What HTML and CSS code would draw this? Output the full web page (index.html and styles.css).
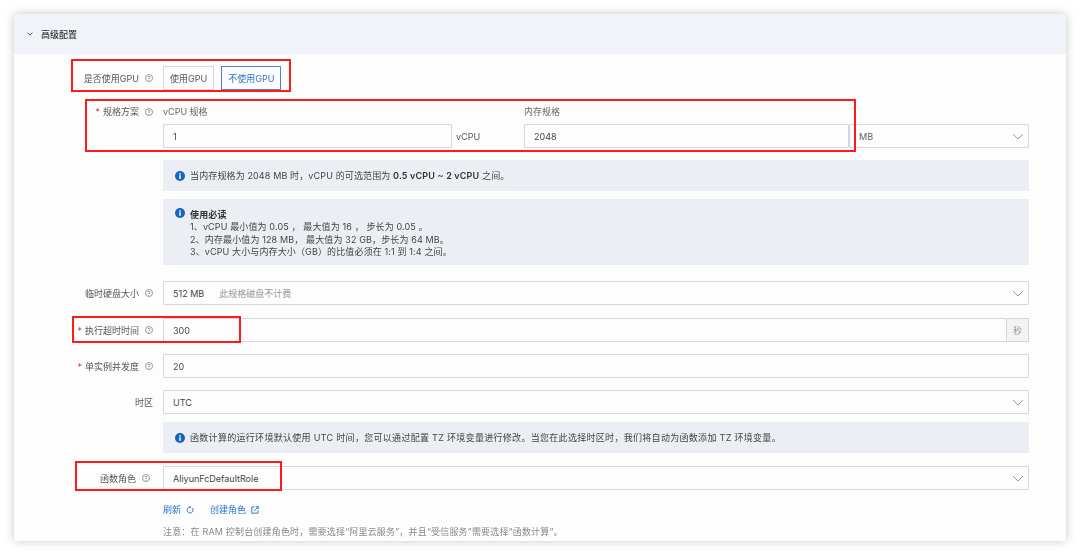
FILE: index.html
```html
<!DOCTYPE html>
<html lang="zh">
<head>
<meta charset="utf-8">
<title>高级配置</title>
<link rel="stylesheet" href="styles.css">
</head>
<body>
<div class="window">
  <div class="head">
    <svg class="head-chev" viewBox="0 0 8 5"><polyline points="0.7,0.7 4,4 7.3,0.7"/></svg>
    <span class="head-title">高级配置</span>
  </div>
  <div class="form">
    <div class="row">
      <div class="label">是否使用GPU<i class="help">?</i></div>
      <div class="field btns">
        <div class="btn">使用GPU</div>
        <div class="btn btn-on">不使用GPU</div>
      </div>
    </div>
    <div class="row row-spec">
      <div class="label label-top"><b class="req">*</b>规格方案<i class="help">?</i></div>
      <div class="field spec">
        <div class="spec-col spec-cpu">
          <div class="sub">vCPU 规格</div>
          <div class="line">
            <div class="box grow">1</div>
            <span class="unit">vCPU</span>
          </div>
        </div>
        <div class="spec-col spec-mem">
          <div class="sub">内存规格</div>
          <div class="line">
            <div class="box grow">2048</div>
            <div class="box select mb">MB<svg class="chev" viewBox="0 0 12 7"><polyline points="1,1 6,6 11,1"/></svg></div>
          </div>
        </div>
      </div>
    </div>
    <div class="row gap12">
      <div class="label"></div>
      <div class="field alert alert-one">
        <svg class="info" viewBox="0 0 12 12"><circle cx="6" cy="6" r="6"/><rect x="5.1" y="5" width="1.8" height="4.4"/><rect x="5.1" y="2.6" width="1.8" height="1.7"/></svg>
        <span>当内存规格为 2048 MB 时，vCPU 的可选范围为 <b>0.5 vCPU ~ 2 vCPU</b> 之间。</span>
      </div>
    </div>
    <div class="row gap8">
      <div class="label"></div>
      <div class="field alert alert-multi">
        <svg class="info" viewBox="0 0 12 12"><circle cx="6" cy="6" r="6"/><rect x="5.1" y="5" width="1.8" height="4.4"/><rect x="5.1" y="2.6" width="1.8" height="1.7"/></svg>
        <div class="lines">
          <div class="title">使用必读</div>
          <div>1、vCPU 最小值为 0.05 ， 最大值为 16 ， 步长为 0.05 。</div>
          <div>2、内存最小值为 128 MB， 最大值为 32 GB，步长为 64 MB。</div>
          <div>3、vCPU 大小与内存大小（GB）的比值必须在 1:1 到 1:4 之间。</div>
        </div>
      </div>
    </div>
    <div class="row gap16">
      <div class="label">临时硬盘大小<i class="help">?</i></div>
      <div class="field box select">512 MB<span class="muted">此规格磁盘不计费</span><svg class="chev" viewBox="0 0 12 7"><polyline points="1,1 6,6 11,1"/></svg></div>
    </div>
    <div class="row gap13">
      <div class="label"><b class="req">*</b>执行超时时间<i class="help">?</i></div>
      <div class="field group">
        <div class="box grow">300</div>
        <div class="addon">秒</div>
      </div>
    </div>
    <div class="row gap12">
      <div class="label"><b class="req">*</b>单实例并发度<i class="help">?</i></div>
      <div class="field box">20</div>
    </div>
    <div class="row gap12">
      <div class="label">时区</div>
      <div class="field box select">UTC<svg class="chev" viewBox="0 0 12 7"><polyline points="1,1 6,6 11,1"/></svg></div>
    </div>
    <div class="row gap8">
      <div class="label"></div>
      <div class="field alert alert-one alert-wide">
        <svg class="info" viewBox="0 0 12 12"><circle cx="6" cy="6" r="6"/><rect x="5.1" y="5" width="1.8" height="4.4"/><rect x="5.1" y="2.6" width="1.8" height="1.7"/></svg>
        <span>函数计算的运行环境默认使用 UTC 时间，您可以通过配置 TZ 环境变量进行修改。当您在此选择时区时，我们将自动为函数添加 TZ 环境变量。</span>
      </div>
    </div>
    <div class="row gap13">
      <div class="label label-role">函数角色<i class="help">?</i></div>
      <div class="field box select">AliyunFcDefaultRole<svg class="chev" viewBox="0 0 12 7"><polyline points="1,1 6,6 11,1"/></svg></div>
    </div>
    <div class="row gap14">
      <div class="label"></div>
      <div class="field links">
        <span class="link">刷新<svg class="lk-ico" viewBox="0 0 10 10"><path d="M7.9 2.6A3.7 3.7 0 1 1 5 1.3"/><path class="fill" d="M4.6 0 7 1.4 4.6 2.8Z"/></svg></span>
        <span class="link">创建角色<svg class="lk-ico" viewBox="0 0 10 10"><path d="M4.2 1.2H1v7.8h7.8V5.8"/><path d="M3.8 6.2 8.8 1.2M5.8 0.9h3.3v3.3"/></svg></span>
      </div>
    </div>
    <div class="row gap10">
      <div class="label"></div>
      <div class="field note">注意：在 RAM 控制台创建角色时，需要选择“阿里云服务”，并且“受信服务”需要选择“函数计算”。</div>
    </div>
  </div>
  <div class="mark mark-gpu"></div>
  <div class="mark mark-spec"></div>
  <div class="mark mark-time"></div>
  <div class="mark mark-role"></div>
</div>
</body>
</html>
```
FILE: styles.css
```css
* { box-sizing: border-box; }
html, body { margin: 0; height: 555px; background: #fff; overflow: hidden; }
body {
  padding: 14px;
  font-family: "Inter", "Noto Sans CJK SC", sans-serif;
  font-size: 9px;
  color: #333;
}
.window {
  position: relative;
  width: 1052px;
  height: 527px;
  background: #fdfdfd;
  box-shadow: 0 0 9px rgba(70, 60, 55, .28);
  overflow: hidden;
  filter: blur(0.3px);
}
.head {
  height: 40px;
  background: #f0f3f7;
  display: flex;
  align-items: center;
  padding-left: 13px;
}
.head-chev { width: 6px; height: 4px; margin-right: 8px; }
.head-chev polyline { fill: none; stroke: #444; stroke-width: 1.2; }
.head-title { font-weight: 500; color: #333; }
.form { padding-top: 12px; }
.row { display: flex; }
.row-spec { margin-top: 16px; }
.gap8 { margin-top: 8px; }
.gap10 { margin-top: 10px; }
.gap12 { margin-top: 12px; }
.gap13 { margin-top: 13px; }
.gap14 { margin-top: 14px; }
.gap16 { margin-top: 16px; }
.label {
  flex: 0 0 149px;
  padding-right: 10px;
  display: flex;
  align-items: center;
  justify-content: flex-end;
  color: #555;
  white-space: nowrap;
}
.label-top { align-items: flex-start; height: 12px; line-height: 12px; }
.label-role { padding-right: 13px; }
.req { color: #d93026; font-weight: 400; margin-right: 3px; }
.help {
  width: 8px;
  height: 8px;
  margin-left: 6px;
  border: 0.7px solid #999;
  border-radius: 50%;
  font-style: normal;
  font-size: 6px;
  line-height: 7px;
  text-align: center;
  color: #888;
  flex: none;
}
.label-top .help { margin-top: 2px; }
.field { width: 866px; flex: none; }
.btns { display: flex; gap: 7px; }
.btn {
  height: 24px;
  line-height: 23px;
  padding: 0 6px;
  border: 1px solid #d3d6de;
  color: #555;
}
.btn-on { border-color: #4a86d0; color: #2a72c8; }
.spec { display: flex; }
.spec-cpu { width: 361px; }
.spec-mem { width: 505px; }
.sub { height: 12px; line-height: 12px; color: #666; margin-bottom: 6px; }
.line { display: flex; align-items: center; }
.box {
  height: 24px;
  padding: 1px 9px 0;
  border: 1px solid #d3d6de;
  border-radius: 1px;
  background: #fdfdfd;
  color: #444;
  display: flex;
  align-items: center;
}
.grow { flex: 1; }
.unit { width: 72px; padding-left: 4px; color: #555; }
.spec-cpu .grow { flex: none; width: 289px; }
.mb { width: 180px; flex: none; color: #666; }
.select { position: relative; }
.chev { width: 12px; height: 7px; margin-left: auto; margin-right: -5px; margin-top: -1px; }
.chev polyline { fill: none; stroke: #999; stroke-width: 1; }
.muted { color: #999; margin-left: 15px; }
.group { display: flex; }
.addon {
  width: 22px;
  height: 24px;
  line-height: 24px;
  text-align: center;
  border: 1px solid #d3d6de;
  border-left: 0;
  background: #f3f3f3;
  color: #999;
}
.alert {
  background: #ebeef3;
  display: flex;
  color: #444;
  padding-left: 12px;
  letter-spacing: .13px;
}
.alert-wide { letter-spacing: .3px; }
.alert b { font-weight: 600; color: #333; letter-spacing: .16px; }
.alert-one { height: 31px; align-items: center; }
.alert-multi { height: 66px; padding-top: 9px; align-items: flex-start; }
.info { width: 10px; height: 10px; margin-right: 5px; flex: none; }
.info circle { fill: #1464c0; }
.info rect { fill: #fff; }
.lines { line-height: 12.3px; padding-top: 1px; }
.title { font-weight: 600; color: #333; }
.links { display: flex; gap: 16px; height: 12px; line-height: 12px; }
.link { color: #2a72c8; display: flex; align-items: center; }
.lk-ico { width: 8px; height: 8px; margin-left: 5px; }
.lk-ico path { fill: none; stroke: #2a72c8; stroke-width: 1.2; }
.lk-ico path.fill { fill: #2a72c8; stroke: none; }
.note { height: 12px; line-height: 12px; color: #888; letter-spacing: .18px; }
.mark { position: absolute; border: 2px solid #ff1a1a; }
.mark-gpu { left: 57px; top: 45px; width: 220px; height: 33px; }
.mark-spec { left: 71px; top: 85px; width: 771px; height: 53px; }
.mark-time { left: 58px; top: 302px; width: 169px; height: 27px; }
.mark-role { left: 61px; top: 447px; width: 207px; height: 30px; }
```
